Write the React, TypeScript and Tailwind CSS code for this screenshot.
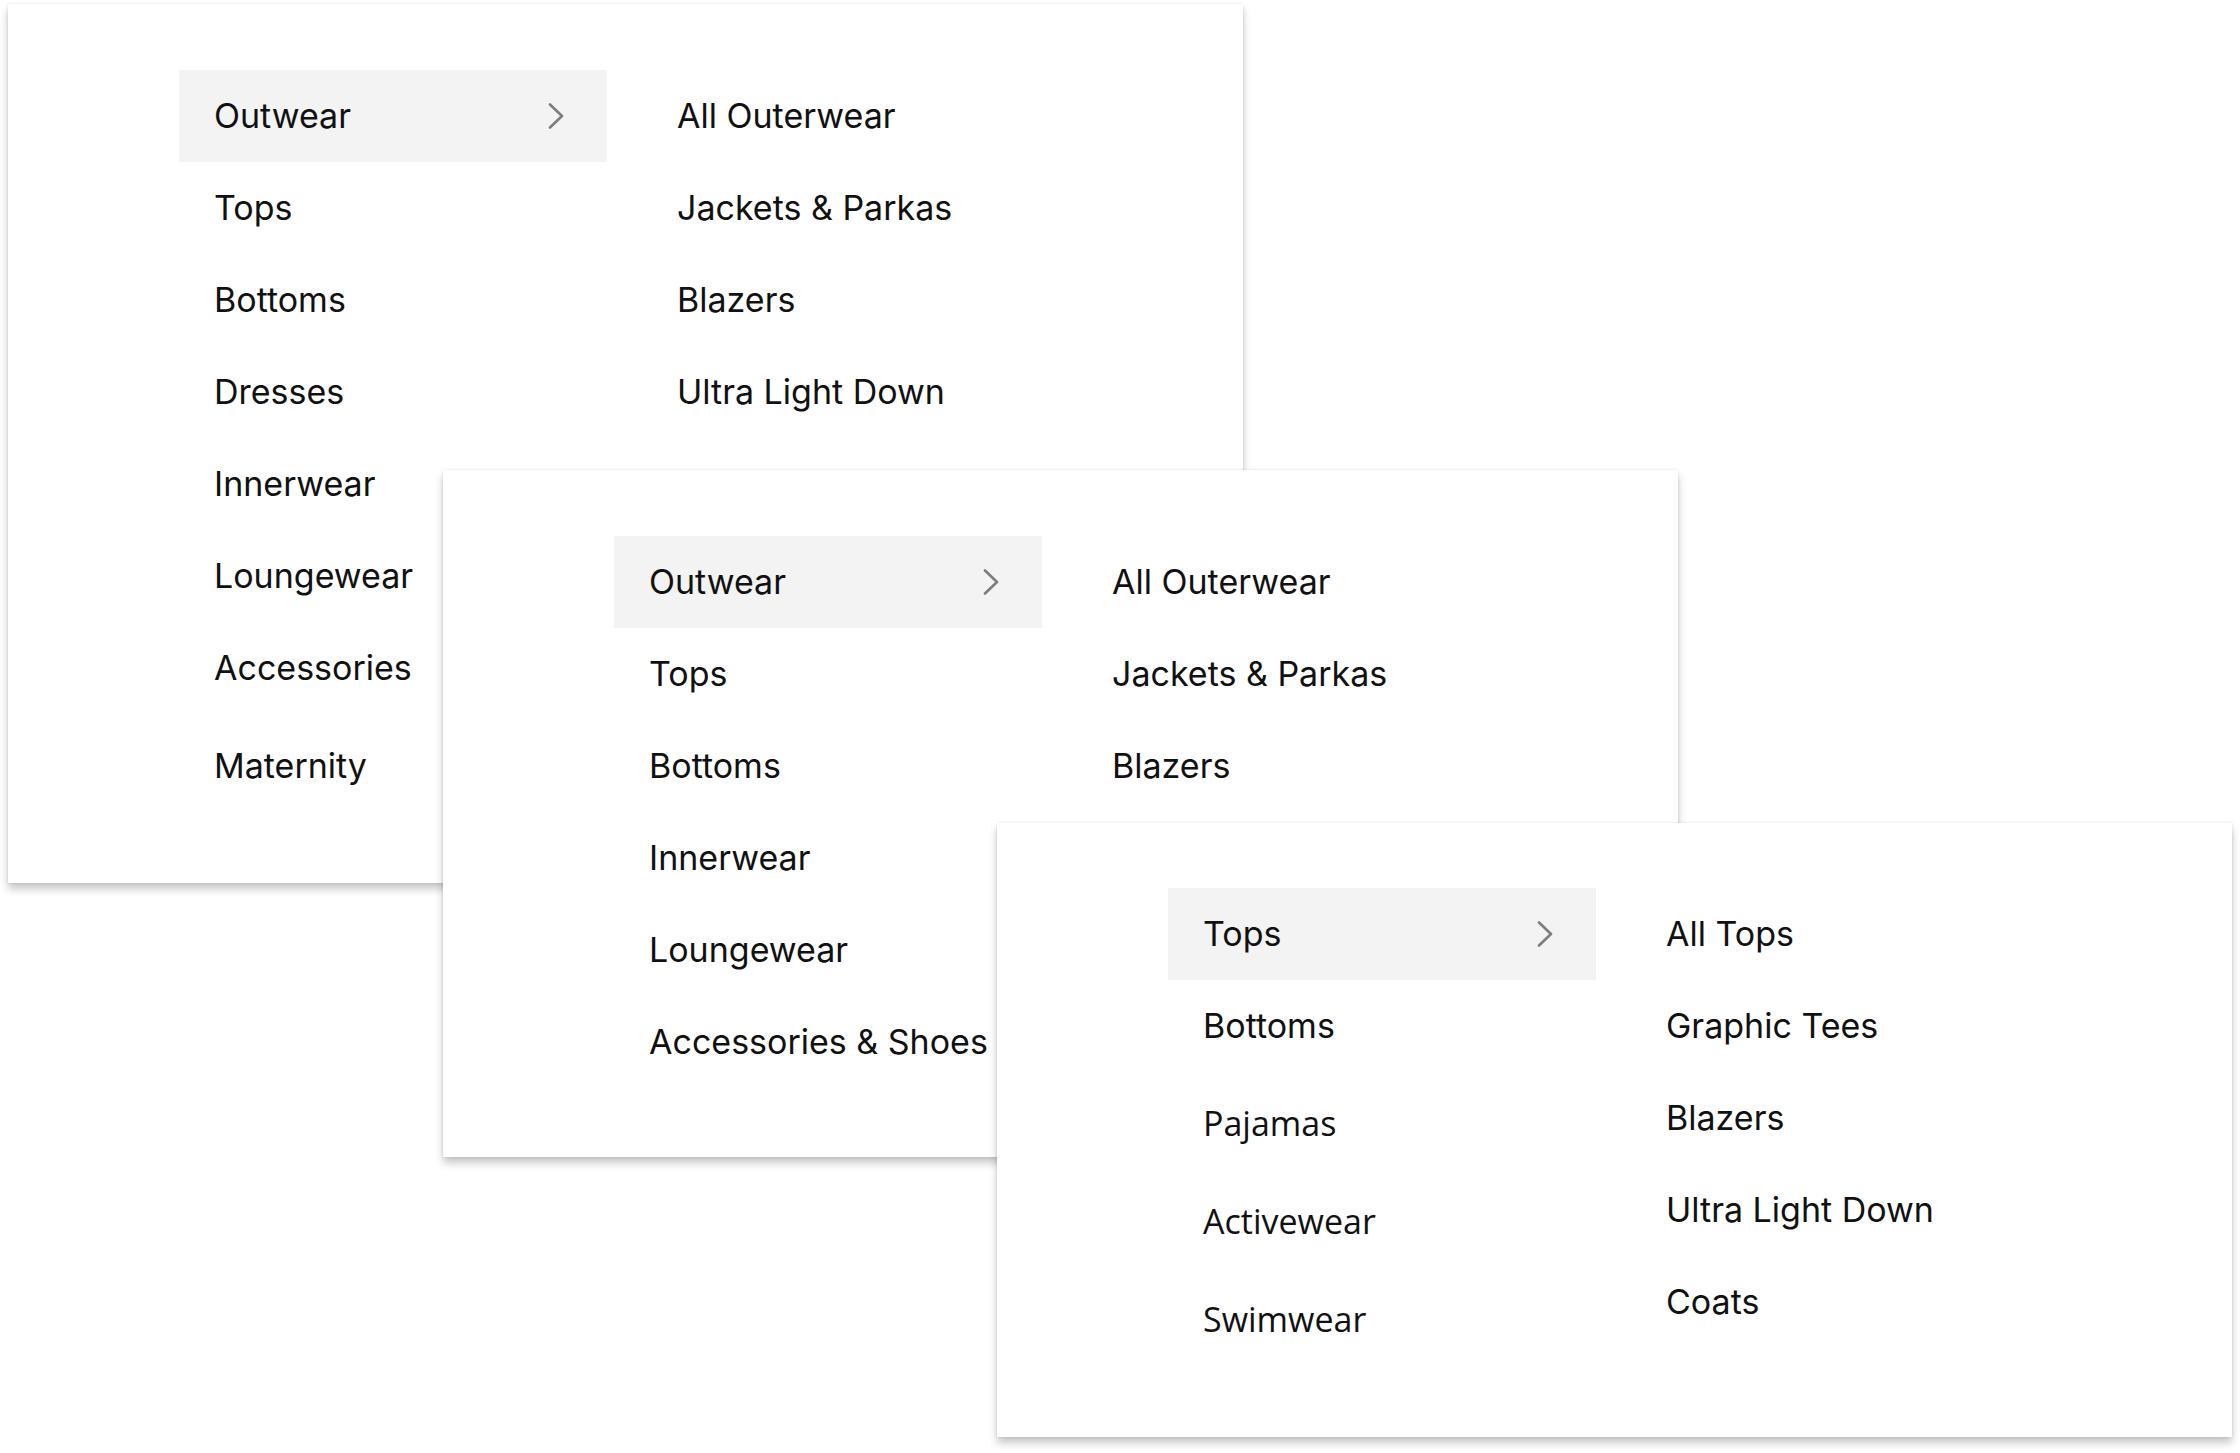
import React from "react";

type Item = { label: string; cls?: string; font?: "open" };

function Chevron() {
  return (
    <svg width="16" height="26" viewBox="0 0 16 26" fill="none" className="shrink-0">
      <polyline
        points="2,1.5 14,13 2,24.5"
        stroke="#7d7d7d"
        strokeWidth="2.6"
        strokeLinecap="round"
        strokeLinejoin="round"
      />
    </svg>
  );
}

function Panel({
  pos,
  left,
  right,
  pt,
}: {
  pos: string;
  left: Item[];
  right: Item[];
  pt: string;
}) {
  return (
    <div
      className={`absolute bg-white w-[1235px] shadow-[0_6px_8px_rgba(0,0,0,0.22),0_0_3px_rgba(0,0,0,0.10)] ${pos}`}
    >
      <div className={`flex pl-[171px] gap-[70px] ${pt}`}>
        <div className="flex flex-col w-[428px]">
          {left.map((it, i) => (
            <div
              key={it.label}
              className={`flex items-center justify-between pl-[35px] pr-[43px] ${
                i === 0 ? "bg-[#f3f3f3]" : ""
              } ${it.cls ?? "h-[92px]"}`}
            >
              <span
                className={`text-[34px] text-[#111111] leading-none whitespace-nowrap ${
                  it.font === "open"
                    ? "font-['Open_Sans',sans-serif]"
                    : "font-['Inter',sans-serif]"
                }`}
              >
                {it.label}
              </span>
              {i === 0 ? <Chevron /> : null}
            </div>
          ))}
        </div>
        <div className="flex flex-col">
          {right.map((it) => (
            <div key={it.label} className="flex items-center h-[92px]">
              <span className="text-[34px] text-[#111111] leading-none whitespace-nowrap font-['Inter',sans-serif]">
                {it.label}
              </span>
            </div>
          ))}
        </div>
      </div>
    </div>
  );
}

export default function App() {
  return (
    <div className="relative w-[2240px] h-[1453px] bg-white overflow-hidden">
      <Panel
        pos="left-[8px] top-[4px] h-[879px]"
        pt="pt-[66px]"
        left={[
          { label: "Outwear" },
          { label: "Tops" },
          { label: "Bottoms" },
          { label: "Dresses" },
          { label: "Innerwear" },
          { label: "Loungewear" },
          { label: "Accessories" },
          { label: "Maternity", cls: "h-[92px] mt-[6px]" },
        ]}
        right={[
          { label: "All Outerwear" },
          { label: "Jackets & Parkas" },
          { label: "Blazers" },
          { label: "Ultra Light Down" },
        ]}
      />
      <Panel
        pos="left-[443px] top-[470px] h-[687px]"
        pt="pt-[66px]"
        left={[
          { label: "Outwear" },
          { label: "Tops" },
          { label: "Bottoms" },
          { label: "Innerwear" },
          { label: "Loungewear" },
          { label: "Accessories & Shoes" },
        ]}
        right={[
          { label: "All Outerwear" },
          { label: "Jackets & Parkas" },
          { label: "Blazers" },
        ]}
      />
      <Panel
        pos="left-[997px] top-[823px] h-[614px]"
        pt="pt-[65px]"
        left={[
          { label: "Tops" },
          { label: "Bottoms" },
          { label: "Pajamas", font: "open", cls: "h-[98px] mt-[2px]" },
          { label: "Activewear", font: "open", cls: "h-[98px]" },
          { label: "Swimwear", font: "open", cls: "h-[98px]" },
        ]}
        right={[
          { label: "All Tops" },
          { label: "Graphic Tees" },
          { label: "Blazers" },
          { label: "Ultra Light Down" },
          { label: "Coats" },
        ]}
      />
    </div>
  );
}
